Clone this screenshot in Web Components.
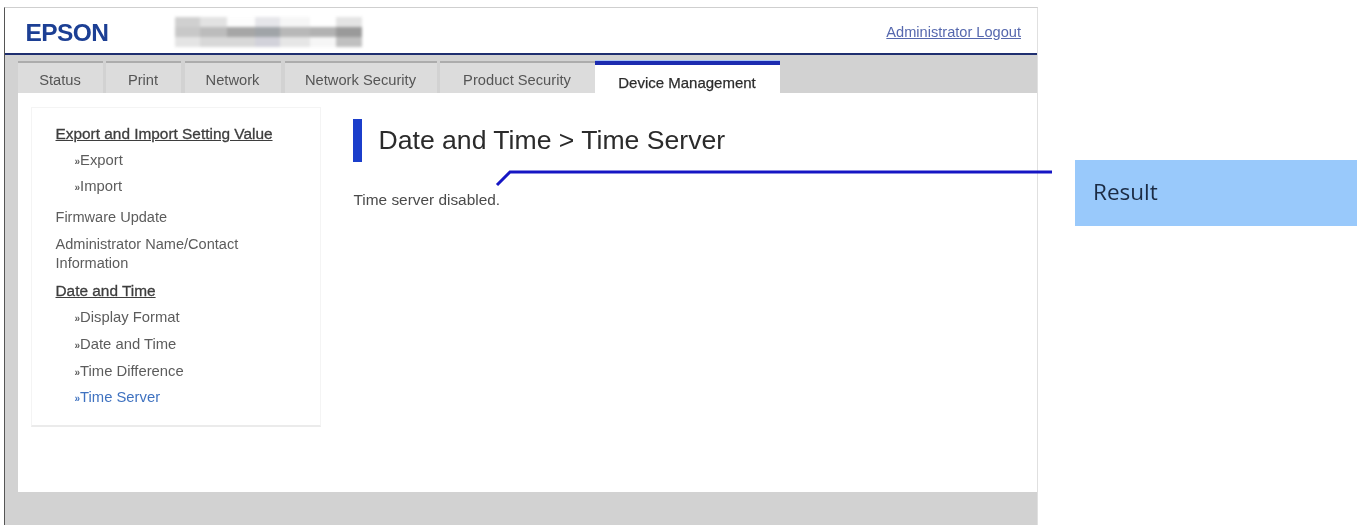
<!DOCTYPE html>
<html lang="en"><head><meta charset="utf-8"><title>Time Server</title>
<style>
html,body{margin:0;padding:0;background:#fff;overflow:hidden}
body{font-family:"Liberation Sans",Arial,sans-serif;width:1359px;height:525px;position:relative}
</style></head><body>
<web-page>
  <app-window slot="window">
    <app-header slot="header"></app-header>
    <tab-bar slot="tabs">
      <tab-item w="85" gap="0">Status</tab-item>
      <tab-item w="75" gap="3">Print</tab-item>
      <tab-item w="96" gap="4">Network</tab-item>
      <tab-item w="152" gap="4">Network Security</tab-item>
      <tab-item w="155" gap="3">Product Security</tab-item>
      <tab-item w="185" gap="0" active>Device Management</tab-item>
    </tab-bar>
    <side-nav slot="side">
      <nav-item kind="head" top="15.5">Export and Import Setting Value</nav-item>
      <nav-item kind="sub" top="8">Export</nav-item>
      <nav-item kind="sub" top="7">Import</nav-item>
      <nav-item kind="top" top="12">Firmware Update</nav-item>
      <nav-item kind="top" top="8">Administrator Name/Contact Information</nav-item>
      <nav-item kind="head" top="8">Date and Time</nav-item>
      <nav-item kind="sub" top="8">Display Format</nav-item>
      <nav-item kind="sub" top="8">Date and Time</nav-item>
      <nav-item kind="sub" top="8">Time Difference</nav-item>
      <nav-item kind="sub" top="7" current>Time Server</nav-item>
    </side-nav>
    <page-content slot="content" heading="Date and Time &gt; Time Server">Time server disabled.</page-content>
  </app-window>
  <call-out slot="aside">Result</call-out>
</web-page>
<script>
function def(name, html, init){
  customElements.define(name, class extends HTMLElement{
    connectedCallback(){
      if(this.shadowRoot) return;
      const r=this.attachShadow({mode:'open'});
      r.innerHTML=html;
      if(init) init(this,r);
    }
  });
}
def('web-page',`<style>
:host{display:flex;width:1359px;height:525px;padding:7px 0 0 4px;box-sizing:border-box;position:relative}
.w{flex:none}
.a{flex:none;margin-left:37px;padding-top:153px}
svg{position:absolute;left:0;top:0;pointer-events:none;filter:blur(.4px)}
</style><div class="w"><slot name="window"></slot></div><div class="a"><slot name="aside"></slot></div>
<svg width="1359" height="525" aria-hidden="true"><path d="M497 185 L510 172 H1052" fill="none" stroke="#1616c4" stroke-width="3"/></svg>`);
def('app-window',`<style>
:host{display:flex;flex-direction:column;width:1034px;height:518px;box-sizing:border-box;border-left:1.5px solid #555;border-top:1px solid #cfcfcf;border-right:1px solid #e0e0e0;background:#d2d2d2}
.m{flex:none;height:399px;margin-left:12.5px;background:#fff;display:flex;align-items:flex-start}
.f{flex:1}
</style><slot name="header"></slot><slot name="tabs"></slot>
<div class="m"><slot name="side"></slot><slot name="content"></slot></div><div class="f"></div>`);
def('app-header',`<style>
:host{display:flex;align-items:center;height:45px;flex:none;background:#fff;border-bottom:2px solid #1f2f70;padding:0 16px 0 20.5px;position:relative}
.logo{font:bold 24.5px "Liberation Sans",sans-serif;color:#1c3f94;letter-spacing:-.6px;filter:blur(.5px);width:149px;margin-top:4px}
.blob{flex:none;filter:blur(1.6px);margin-top:3px}
.sp{flex:1}
a{font-size:14.6px;color:#5668ae;text-decoration:underline;filter:blur(.5px);margin-top:3px}
</style><div class="logo">EPSON</div>
<svg class="blob" width="187" height="30" aria-hidden="true">
<rect x="0" y="0" width="25" height="10" fill="#d0d0d0"/><rect x="25" y="0" width="27" height="10" fill="#e2e2e2"/><rect x="52" y="0" width="28" height="10" fill="#fdfdfd"/><rect x="80" y="0" width="25" height="10" fill="#e6e6ea"/><rect x="105" y="0" width="30" height="10" fill="#f6f6f6"/><rect x="135" y="0" width="26" height="10" fill="#fff"/><rect x="161" y="0" width="26" height="10" fill="#e4e4e4"/>
<rect x="0" y="10" width="25" height="10" fill="#c8c8c8"/><rect x="25" y="10" width="27" height="10" fill="#bcbcbc"/><rect x="52" y="10" width="28" height="10" fill="#a6a6a6"/><rect x="80" y="10" width="25" height="10" fill="#a0a4a8"/><rect x="105" y="10" width="30" height="10" fill="#b8b8b8"/><rect x="135" y="10" width="26" height="10" fill="#b2b2b2"/><rect x="161" y="10" width="26" height="10" fill="#9a9a9a"/>
<rect x="0" y="20" width="25" height="10" fill="#e4e4e4"/><rect x="25" y="20" width="27" height="10" fill="#d8d8d8"/><rect x="52" y="20" width="28" height="10" fill="#d8d8d8"/><rect x="80" y="20" width="25" height="10" fill="#d2d2da"/><rect x="105" y="20" width="30" height="10" fill="#e6e6e6"/><rect x="135" y="20" width="26" height="10" fill="#f6f6f6"/><rect x="161" y="20" width="26" height="10" fill="#c0c0c0"/>
</svg><div class="sp"></div><a href="#">Administrator Logout</a>`);
def('tab-bar',`<style>
:host{display:flex;align-items:flex-end;flex:none;height:38px;margin-left:12.5px;box-sizing:border-box}
</style><slot></slot>`);
def('tab-item',`<style>
:host{display:flex;align-items:center;justify-content:center;box-sizing:border-box;height:32px;background:#dcdcdc;border-top:2px solid #acacac;color:#555;font-size:14.7px;padding-top:4px;flex:none}
:host([active]){background:#fff;border-top:4px solid #1c2bb0;box-shadow:0 -1px 0 #a9c4f5;color:#2c2c2c;font-size:15px;-webkit-text-stroke:.25px #2c2c2c;padding-top:6px}
span{filter:blur(.5px)}
</style><span><slot></slot></span>`,(el)=>{el.style.width=el.getAttribute('w')+'px';el.style.marginLeft=el.getAttribute('gap')+'px'});
def('side-nav',`<style>
:host{display:block;flex:none;box-sizing:border-box;width:290px;height:320px;margin:14px 0 0 13px;padding:0 24px;background:#fff;border:1px solid #f4f4f4;border-bottom:2px solid #ebebeb;filter:blur(.45px)}
</style><slot></slot>`);
def('nav-item',`<style>
:host{display:block;color:#5c5c5c;font-size:14.55px;line-height:19px}
:host([kind=head]){color:#3e3e3e;font-size:15.4px;-webkit-text-stroke:.3px #3e3e3e;text-decoration:underline}
:host([kind=sub]){padding-left:19px;font-size:14.8px}
:host([current]){color:#3f72c0}
.m{display:none;font-size:10px;font-weight:bold;line-height:0}
:host([kind=sub]) .m{display:inline}
</style><span class="m">»</span><slot></slot>`,(el)=>{el.style.marginTop=el.getAttribute('top')+'px'});
def('page-content',`<style>
:host{display:block;flex:1;padding:26px 0 0 32px}
h1{margin:0;font-weight:400;font-size:26.6px;line-height:43px;color:#2b2b2b;border-left:9px solid #1b3ecb;padding-left:17px;filter:blur(.45px)}
p{margin:29px 0 0 1px;font-size:15.4px;line-height:18px;color:#4a4a4a;filter:blur(.5px)}
</style><h1></h1><p><slot></slot></p>`,(el,r)=>{r.querySelector('h1').textContent=el.getAttribute('heading')});
def('call-out',`<style>
:host{display:flex;align-items:center;box-sizing:border-box;width:282px;height:66px;padding:0 0 4px 18px;background:#99c9fb;color:#1b2b44;font:22.5px "Open Sans",sans-serif}
span{filter:blur(.4px)}
</style><span><slot></slot></span>`);
</script>
</body></html>
